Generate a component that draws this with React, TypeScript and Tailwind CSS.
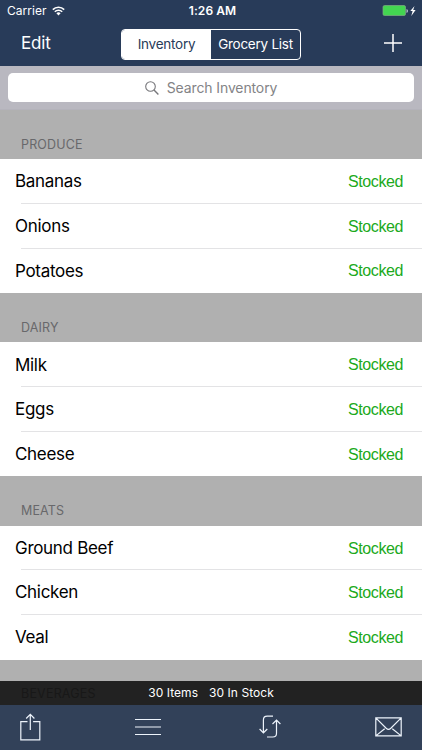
import React from "react";

const sections = [
  { name: "PRODUCE", items: ["Bananas", "Onions", "Potatoes"] },
  { name: "DAIRY", items: ["Milk", "Eggs", "Cheese"] },
  { name: "MEATS", items: ["Ground Beef", "Chicken", "Veal"] },
];

function StatusBar() {
  return (
    <div className="grid h-[22px] grid-cols-3 items-center px-[7px] text-[12px] leading-[22px]">
      <div className="flex items-center gap-[5px]">
        <span className="tracking-[0.05px]">Carrier</span>
        <svg width="13" height="10" viewBox="0 0 13 10" fill="none" stroke="white" strokeWidth="1.6">
          <path d="M.8 3.6a8.1 8.1 0 0 1 11.4 0" />
          <path d="M2.8 5.8a5.2 5.2 0 0 1 7.4 0" />
          <path d="M6.5 9.4 4.4 7.3a3 3 0 0 1 4.2 0Z" fill="white" stroke="none" />
        </svg>
      </div>
      <div className="pl-[3px] text-center font-semibold tracking-[0.1px]">1:26 AM</div>
      <div className="-mr-[2px] flex items-center justify-end">
        <svg width="35" height="12" viewBox="0 0 35 12">
          <rect x="1" y=".5" width="22.5" height="10" rx="1.5" fill="#43d551" stroke="#7eac83" strokeWidth=".7" />
          <path d="M24.5 4v4q1.5-.4 1.5-2t-1.5-2Z" fill="#b8c3cd" />
          <path d="m32.5 1-4.2 5.1h2.3L29.3 11l4.3-6h-2.4Z" fill="white" />
        </svg>
      </div>
    </div>
  );
}

function NavBar() {
  return (
    <div className="flex h-11 items-center justify-between pl-[21px] pr-[20px]">
      <button className="w-[60px] text-left text-[17px] tracking-[-0.2px]">Edit</button>
      <div className="mr-px flex h-[31px] w-[180px] overflow-hidden rounded-[4px] border border-white text-[13.5px] tracking-[-0.25px]">
        <button className="w-[89px] bg-white text-[#283b59]">Inventory</button>
        <button className="flex-1 whitespace-nowrap">Grocery List</button>
      </div>
      <button className="flex w-[60px] justify-end">
        <svg className="-mt-[2px]" width="18" height="18" viewBox="0 0 18 18" fill="none" stroke="white" strokeWidth="1.5">
          <path d="M0 9h18M9 0v18" />
        </svg>
      </button>
    </div>
  );
}

function SearchBar() {
  return (
    <div className="h-11 border-b border-[#b4b3bb] bg-[#b9b8c0] px-2 pt-[7px]">
      <div className="flex h-[29px] items-center justify-center gap-[8px] rounded-[5px] bg-white text-[14px] tracking-[-0.12px] text-[#838386]">
        <svg width="14" height="14" viewBox="0 0 14 14" fill="none" stroke="#77777b" strokeWidth="1.1">
          <circle cx="5.5" cy="5.5" r="4.8" />
          <path d="m9 9 4.4 4.4" strokeWidth="1.4" />
        </svg>
        <span>Search Inventory</span>
      </div>
    </div>
  );
}

function Section({ name, items }: { name: string; items: string[] }) {
  return (
    <section>
      <h2 className="h-[49.25px] pl-[21px] pt-[26px] text-[12.5px] leading-[18px] tracking-[0.15px] text-[#68686b]">{name}</h2>
      <ul className="bg-white">
        {items.map((item, i) => (
          <li key={item} className="flex h-[44.67px] flex-col">
            <div className="flex flex-1 items-center justify-between pl-[15px] pr-[19px] pt-[2px]">
              <span className="text-[17px] tracking-[-0.3px] text-black">{item}</span>
              <span className="font-['Liberation_Sans',sans-serif] text-[16px] tracking-[-0.4px] text-[#20a91b]">Stocked</span>
            </div>
            <div className={i < items.length - 1 ? "ml-[21px] h-px bg-[#e3e3e5]" : "h-px"} />
          </li>
        ))}
      </ul>
    </section>
  );
}

function ToolBar() {
  return (
    <div className="flex h-[45px] items-center justify-between bg-[#324159] pb-px pl-[20px] pr-[20px]">
      <svg width="21" height="28" viewBox="0 0 21 28" fill="none" stroke="#edf3fb" strokeWidth="1.2">
        <path d="M7.5 8.7H.8v18.1h19V8.7h-6.7M10.3 17V1.5M6.2 5.5l4.1-4.2 4.1 4.2" />
      </svg>
      <svg className="-ml-[3px]" width="26" height="18" viewBox="0 0 26 18" stroke="#edf3fb" strokeWidth="1.2">
        <path d="M0 1.5h26M0 9h26M0 16.5h26" />
      </svg>
      <svg className="-mr-[3px]" width="22" height="24" viewBox="0 0 22 24" fill="none" stroke="#edf3fb" strokeWidth="1.2">
        <path d="M14 1.2H8.2q-3.8 0-3.8 3.8v12.5M.6 14l3.8 3.8L8.3 14M8 22h5.8q3.7 0 3.7-3.8V5.5M13.5 9l4-4 3.9 4" />
      </svg>
      <svg width="27" height="20" viewBox="0 0 27 20" fill="none" stroke="#edf3fb" strokeWidth="1.2">
        <path d="M.8.8h25.4v18.1H.8ZM.8.8l10.4 10.4q2.3 2.2 4.6 0L26.2.8M.8 18.9l8.9-7.2M26.2 18.9l-8.9-7.2" />
      </svg>
    </div>
  );
}

export default function App() {
  return (
    <div className="flex h-[750px] w-[422px] flex-col overflow-hidden bg-[#b0b0b0] font-['Inter',sans-serif] text-white">
      <header className="h-[66px] shrink-0 bg-[#283b59]">
        <StatusBar />
        <NavBar />
      </header>
      <SearchBar />
      <main className="min-h-0 flex-1">
        {sections.map((section) => (
          <Section key={section.name} {...section} />
        ))}
      </main>
      <footer className="shrink-0">
        <div className="grid h-6 grid-cols-[1fr_auto_1fr] items-center bg-[#222222] text-[12px]">
          <span className="pl-[21px] pt-[3px] text-[12.5px] tracking-[0.2px] text-[#181818]">BEVERAGES</span>
          <span className="flex gap-[11px] tracking-[0.05px]">
            <span>30 Items</span>
            <span>30 In Stock</span>
          </span>
        </div>
        <ToolBar />
      </footer>
    </div>
  );
}
